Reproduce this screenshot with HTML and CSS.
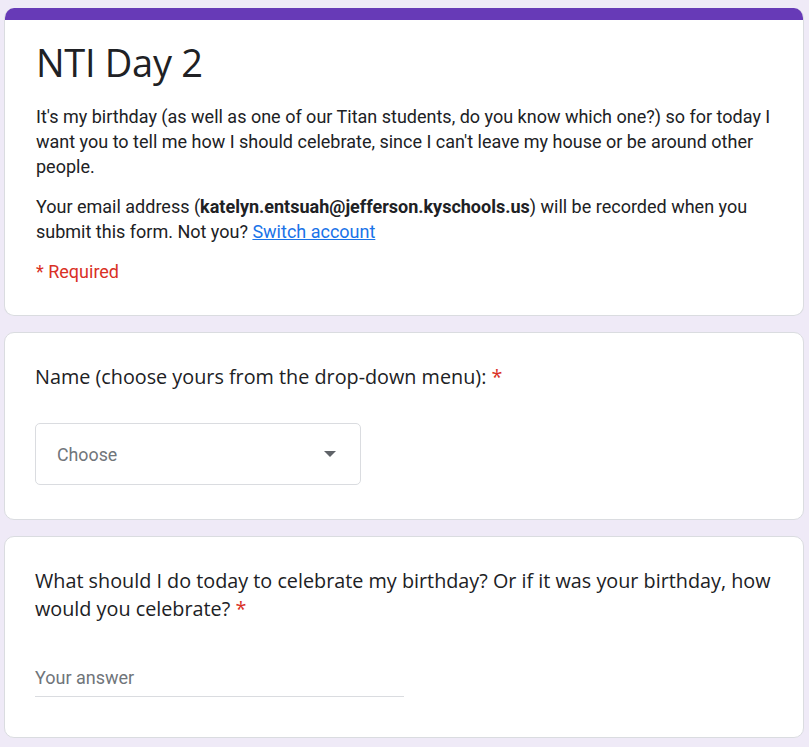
FILE: index.html
```html
<!DOCTYPE html>
<html>
<head>
<meta charset="utf-8">
<link rel="stylesheet" href="styles.css">
</head>
<body>
<div class="form">
  <div class="card header-card">
    <div class="bar"></div>
    <div class="content">
      <h1 class="title">NTI Day 2</h1>
      <p class="desc">It's my birthday (as well as one of our Titan students, do you know which one?) so for today I want you to tell me how I should celebrate, since I can't leave my house or be around other people.</p>
      <p class="desc">Your email address (<b>katelyn.entsuah@jefferson.kyschools.us</b>) will be recorded when you submit this form. Not you? <a href="#" class="link">Switch account</a></p>
      <p class="required">* Required</p>
    </div>
  </div>

  <div class="card question q1">
    <div class="qtitle">Name (choose yours from the drop-down menu): <span class="star">*</span></div>
    <div class="select">
      <span class="placeholder">Choose</span>
      <span class="arrow"></span>
    </div>
  </div>

  <div class="card question q2">
    <div class="qtitle">What should I do today to celebrate my birthday? Or if it was your birthday, how would you celebrate? <span class="star">*</span></div>
    <div class="answer">Your answer</div>
  </div>
</div>
</body>
</html>
```

FILE: styles.css
```css
html, body {
  margin: 0;
  padding: 0;
}
body {
  background: #efeaf7;
  font-family: Roboto, "Liberation Sans", sans-serif;
  color: #202124;
}
.form {
  padding: 8px 0 0 4px;
  width: 800px;
  display: flex;
  flex-direction: column;
  gap: 16px;
}
.card {
  background: #fff;
  border: 1px solid #dadce0;
  border-radius: 10px;
  box-sizing: border-box;
}
.header-card {
  overflow: hidden;
  border-top: none;
}
.bar {
  height: 12px;
  background: #673ab7;
}
.content {
  padding: 18px 30px 31px 31px;
}
.title {
  margin: 0;
  font-family: "Open Sans", Roboto, sans-serif;
  font-weight: 400;
  font-size: 38px;
  line-height: 48px;
  letter-spacing: -0.3px;
}
.desc {
  margin: 18px 0 0 0;
  font-size: 18px;
  line-height: 25px;
}
.desc + .desc {
  margin-top: 15px;
}
.desc b {
  font-weight: 700;
}
.link {
  color: #1a73e8;
  text-decoration: underline;
}
.required {
  margin: 15px 0 0 0;
  color: #d93025;
  font-size: 18px;
  line-height: 25px;
}
.question {
  padding: 30px 30px 34px 30px;
}
.qtitle {
  font-family: "Open Sans", Roboto, sans-serif;
  font-size: 19.8px;
  line-height: 28px;
  letter-spacing: 0;
}
.star {
  color: #d93025;
}
.select {
  margin-top: 32px;
  width: 326px;
  height: 62px;
  box-sizing: border-box;
  border: 1px solid #dadce0;
  border-radius: 5px;
  display: flex;
  align-items: center;
  justify-content: space-between;
  padding: 0 24px 0 21px;
}
.placeholder {
  font-size: 17.8px;
  color: #70757a;
}
.arrow {
  width: 0;
  height: 0;
  border-left: 6px solid transparent;
  border-right: 6px solid transparent;
  border-top: 6px solid #5f6368;
}
.q2 {
  padding-bottom: 40px;
}
.answer {
  margin-top: 42px;
  width: 369px;
  font-size: 18px;
  line-height: 25px;
  color: #70757a;
  padding-bottom: 6px;
  border-bottom: 1px solid #dadce0;
}
```
